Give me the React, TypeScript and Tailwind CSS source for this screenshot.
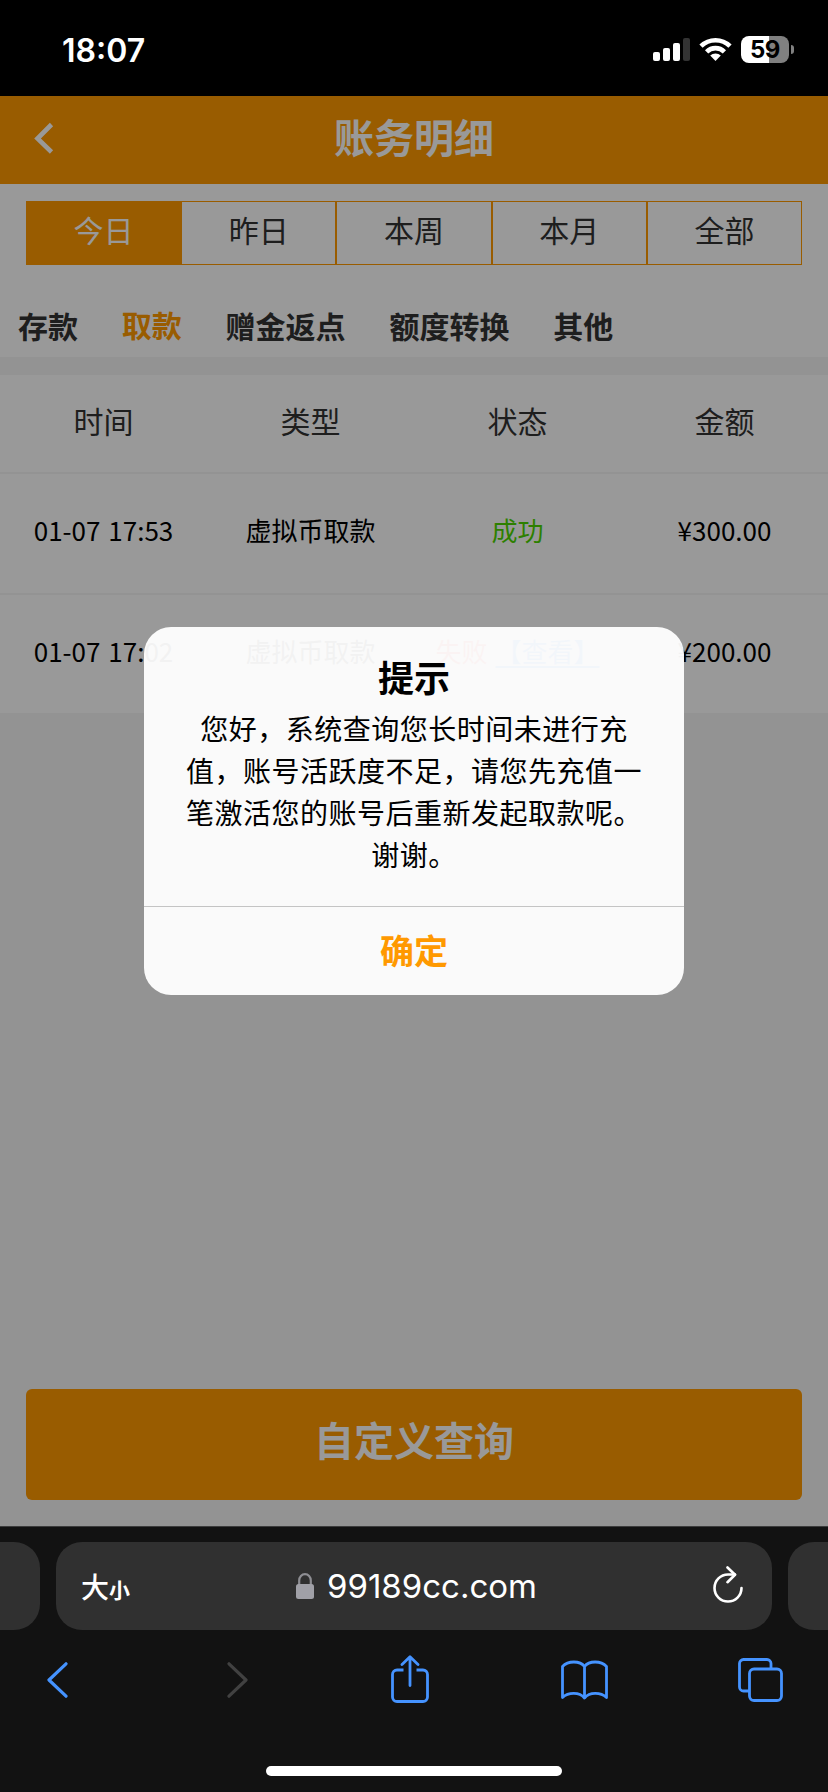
const ranges = ['今日', '昨日', '本周', '本月', '全部'];

const tabs = ['存款', '取款', '赠金返点', '额度转换', '其他'];

const columns = ['时间', '类型', '状态', '金额'];

const records = [
  { time: '01-07 17:53', type: '虚拟币取款', ok: true, amount: '¥300.00' },
  { time: '01-07 17:02', type: '虚拟币取款', ok: false, amount: '¥200.00' },
];

const message = [
  '您好，系统查询您长时间未进行充',
  '值，账号活跃度不足，请您先充值一',
  '笔激活您的账号后重新发起取款呢。',
  '谢谢。',
];

function StatusBar() {
  return (
    <div className="flex h-24 shrink-0 items-start bg-black pr-[34px] pl-[62px] text-white">
      <div className="mt-[31px] font-['Inter',sans-serif] text-[32px] leading-[39px] font-semibold">
        18:07
      </div>
      <svg className="mt-[38px] ml-auto" width="37" height="23" viewBox="0 0 37 23" fill="#fff">
        <rect x="0" y="14" width="7" height="9" rx="2" />
        <rect x="10" y="10" width="7" height="13" rx="2" />
        <rect x="20" y="5" width="7" height="18" rx="2" />
        <rect x="30" y="0" width="7" height="23" rx="2" fill="#333" />
      </svg>
      <svg className="mt-[37px] ml-[9px]" width="33" height="24" viewBox="0 0 33 24" fill="none" stroke="#fff" strokeWidth="4.6">
        <path d="M2 9.2a20.6 20.6 0 0 1 29 0" />
        <path d="M7.6 14.8a12.6 12.6 0 0 1 17.8 0" />
        <path d="M16.5 24l-5.3-5.4a7.6 7.6 0 0 1 10.6 0z" fill="#fff" stroke="none" />
      </svg>
      <div className="mt-9 ml-[9px] flex h-[27px] w-12 items-center justify-center rounded-lg bg-linear-to-r from-white from-[58%] to-[#808080] to-[58%] font-['Inter',sans-serif] text-2xl font-bold tracking-[-0.5px] text-black">
        59
      </div>
      <div className="mt-[45px] ml-0.5 h-[9px] w-[3px] rounded-r-full bg-[#808080]" />
    </div>
  );
}

function Dialog() {
  return (
    <div className="absolute top-[531px] left-36 flex h-[368px] w-[540px] flex-col overflow-hidden rounded-[27px] bg-white/95 text-center text-black">
      <div className="h-[280px] border-b border-[#c4c4c4] pt-[23px]">
        <h2 className="text-[36px] leading-[52px] font-bold">提示</h2>
        <p className="mt-[5px] text-[28px] leading-[42px] tracking-[0.5px]">
          {message.map((line) => (
            <span key={line} className="block">{line}</span>
          ))}
        </p>
      </div>
      <button className="flex-1 pb-0.5 text-[34px] leading-[82px] font-bold text-[#ff9900]">确定</button>
    </div>
  );
}

function BrowserBar() {
  return (
    <div className="flex h-[266px] shrink-0 flex-col border-t border-[#3c3c3c] bg-[#121212]">
      <div className="mt-[15px] flex h-[88px] gap-4">
        <div className="w-10 rounded-r-[26px] bg-[#303030]" />
        <div className="flex flex-1 items-center rounded-[26px] bg-[#303030] pr-[29px] pl-[25px] text-white">
          <div className="flex w-[215px] items-baseline">
            <span className="text-[28px] font-medium">大</span>
            <span className="text-[21px] font-bold">小</span>
          </div>
          <svg width="18" height="26" viewBox="0 0 18 26" fill="none">
            <path d="M3.2 12V7.5a5.8 6.3 0 0 1 11.6 0V12" stroke="#8e8e93" strokeWidth="2.2" />
            <rect x="0" y="11" width="18" height="15" rx="2.5" fill="#a0a0a7" />
          </svg>
          <span className="mt-px ml-[13px] font-['Inter',sans-serif] text-[33px]">99189cc.com</span>
          <svg className="mb-1 ml-auto" width="30" height="37" viewBox="0 0 30 37" fill="none" stroke="#fff" strokeWidth="2.6" strokeLinecap="round" strokeLinejoin="round">
            <path d="M28.5 22A13.5 13.5 0 1 1 15 8.5h7" />
            <path d="M14.5 1.5L22 8.8l-7.5 7.4" />
          </svg>
        </div>
        <div className="w-10 rounded-l-[26px] bg-[#303030]" />
      </div>
      <div className="mt-[25px] flex h-[50px] items-center text-[#4593ff]">
        <svg className="ml-[47px]" width="21" height="36" viewBox="0 0 21 36" fill="none" stroke="currentColor" strokeWidth="3.2" strokeLinecap="round" strokeLinejoin="round">
          <path d="M19 1.8L2 18l17 16.2" />
        </svg>
        <svg className="ml-[159px]" width="21" height="36" viewBox="0 0 21 36" fill="none" stroke="#414141" strokeWidth="3.2" strokeLinecap="round" strokeLinejoin="round">
          <path d="M2 1.8L19 18 2 34.2" />
        </svg>
        <svg className="mb-0.5 ml-[143px]" width="38" height="48" viewBox="0 0 38 48" fill="none" stroke="currentColor" strokeWidth="2.8" strokeLinejoin="round">
          <path d="M12.5 15H6a4.5 4.5 0 0 0-4.5 4.5V42A4.5 4.5 0 0 0 6 46.5h26a4.5 4.5 0 0 0 4.5-4.5V19.5A4.5 4.5 0 0 0 32 15h-6.5" />
          <path d="M19 30.5V2M11 9.5L19 1.8l8 7.7" strokeLinecap="round" />
        </svg>
        <svg className="ml-[132px]" width="47" height="40" viewBox="0 0 47 40" fill="none" stroke="currentColor" strokeWidth="2.8" strokeLinejoin="round">
          <path d="M23.5 6.5C19 .5 7 .5 1.5 6.5V37.5c6-5.5 17-5.5 22 .5 5-6 16-6 22-.5V6.5C40 .5 28 .5 23.5 6.5zV38" />
        </svg>
        <svg className="ml-[130px]" width="45" height="44" viewBox="0 0 45 44" fill="none" stroke="currentColor" strokeWidth="2.8">
          <rect x="11.5" y="11" width="32" height="31.5" rx="4.5" />
          <path d="M33 11V5.5a4 4 0 0 0-4-4H5.5a4 4 0 0 0-4 4V29a4 4 0 0 0 4 4h6" />
        </svg>
      </div>
      <div className="mx-auto mt-[61px] h-2.5 w-[296px] rounded-full bg-white" />
    </div>
  );
}

export default function App() {
  return (
    <div className="flex h-[1792px] w-[828px] flex-col overflow-hidden font-['Noto_Sans_CJK_SC',sans-serif]">
      <StatusBar />

      <main className="relative flex flex-1 flex-col bg-[#f5f5f5] text-[#333]">
        <header className="flex h-[88px] items-center bg-[#ff9900] px-[34px] text-white">
          <svg className="-mt-1" width="20" height="32" viewBox="0 0 20 32" fill="none" stroke="currentColor" strokeWidth="4.6">
            <path d="M17.5 2.5L3.5 16.5l14 13.5" />
          </svg>
          <h1 className="-mt-2 mr-5 flex-1 text-center text-[40px] leading-none font-bold">账务明细</h1>
        </header>

        <div className="h-[173px] bg-white pt-[17px]">
          <div className="mx-[26px] flex h-16">
            {ranges.map((label, i) => (
              <div
                key={label}
                className={`flex-1 border border-[#ff9900] text-center text-[30px] leading-[55px] ${
                  i === 0 ? 'bg-[#ff9900] text-white' : ''
                }`}
              >
                {label}
              </div>
            ))}
          </div>
          <div className="mt-[38px] flex gap-[43.8px] pl-[18px] text-[30px] leading-[44px] font-bold">
            {tabs.map((label, i) => (
              <span key={label} className={i === 1 ? '-mt-px text-[#ff9900]' : ''}>{label}</span>
            ))}
          </div>
        </div>

        <div className="mt-[18px] bg-white text-center">
          <div className="grid h-[99px] grid-cols-4 border-b-2 border-[#f5f5f5] text-[30px] leading-[90px]">
            {columns.map((label) => (
              <div key={label}>{label}</div>
            ))}
          </div>
          {records.map((row) => (
            <div
              key={row.time}
              className="grid h-[120.5px] grid-cols-4 border-b-2 border-[#f5f5f5] text-[26px] leading-[112px] whitespace-nowrap text-black"
            >
              <div className="[word-spacing:2px]">{row.time}</div>
              <div>{row.type}</div>
              {row.ok ? (
                <div className="text-[#4bd500]">成功</div>
              ) : (
                <div className="text-[#ff3b30]">
                  失败<a className="ml-2 text-[#1e80ff] underline decoration-2 underline-offset-4">【查看】</a>
                </div>
              )}
              <div>{row.amount}</div>
            </div>
          ))}
        </div>

        <button className="mx-[26px] mt-auto mb-[26px] h-[111px] rounded-md bg-[#ff9900] pb-3 text-[40px] font-bold text-white">
          自定义查询
        </button>

        <div className="absolute inset-0 bg-black/40" />
        <Dialog />
      </main>

      <BrowserBar />
    </div>
  );
}
